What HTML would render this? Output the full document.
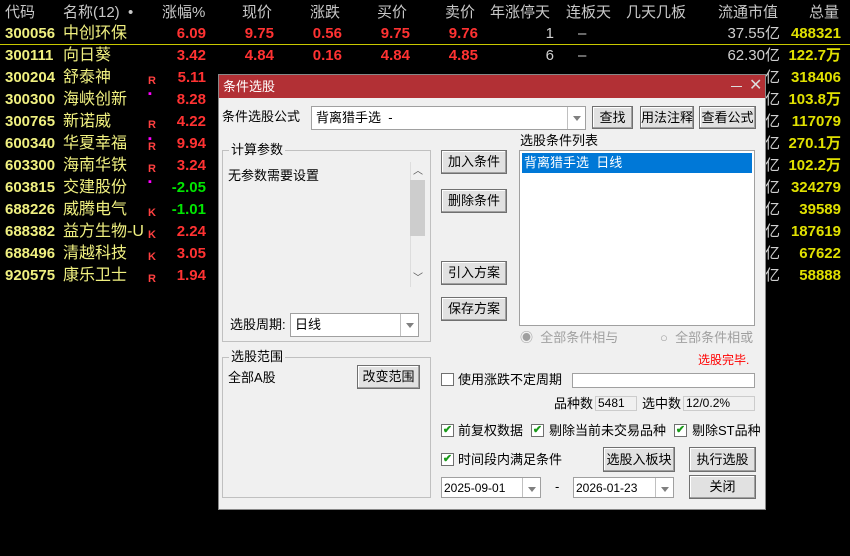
<!DOCTYPE html><html><head><meta charset="utf-8"><style>
*{margin:0;padding:0;box-sizing:border-box}
body{width:850px;height:556px;background:#000;position:relative;overflow:hidden;font-family:"Liberation Sans","Noto Sans CJK SC",sans-serif}
.a{position:absolute;white-space:nowrap;line-height:18px}
.h{color:#c8c8c8;font-size:15px;top:4px}
.c{color:#f0f080;font-size:15px;font-weight:bold;left:5px}
.n{color:#f0f080;font-size:16px;left:63px}
.r{color:#ff3232;font-size:15px;font-weight:bold;text-align:right}
.g{color:#00e600}
.w{color:#d0d0d0;font-size:15px;text-align:right}
.y{color:#e0e000;font-size:15px;font-weight:bold;text-align:right;width:70px;left:771px}
.m{color:#ff4040;font-size:11px;font-weight:bold;left:148px}
.d{font-size:13px;color:#000}
.btn{position:absolute;background:#e1e1e1;border:1px solid #707070;box-shadow:inset -1px -1px #a0a0a0,inset 1px 1px #fff;font-size:13px;text-align:center;color:#000}
.box{position:absolute;background:#fff;border:1px solid #a0a0a0}
.grp{position:absolute;border:1px solid #c0c0c0}
.gl{position:absolute;background:#f0f0f0;font-size:13px;line-height:16px;padding:0 2px;top:-9px;left:6px}
.cb{position:absolute;width:13px;height:13px;border:1px solid #707070;background:#fff;font-size:11px;color:#1a9a1a;line-height:11px;text-align:center;font-weight:bold}
.arr{position:absolute;right:0;top:0;bottom:0;width:18px;border-left:1px solid #c0c0c0}
.arr:after{content:"";position:absolute;left:5px;top:9px;border:4px solid transparent;border-top:5px solid #808080}
</style></head><body>
<div class="a h" style="left:5px">代码</div>
<div class="a h" style="left:63px">名称(12)&nbsp; •</div>
<div class="a h" style="left:162px">涨幅%</div>
<div class="a h" style="left:242px">现价</div>
<div class="a h" style="left:310px">涨跌</div>
<div class="a h" style="left:377px">买价</div>
<div class="a h" style="left:445px">卖价</div>
<div class="a h" style="left:490px">年涨停天</div>
<div class="a h" style="left:566px">连板天</div>
<div class="a h" style="left:626px">几天几板</div>
<div class="a h" style="left:718px">流通市值</div>
<div class="a h" style="left:809px">总量</div>
<div class="a" style="left:0;top:44px;width:850px;height:1px;background:#c8c800"></div>
<div style="position:absolute;left:0;top:25px;width:850px">
<div class="a c" style="top:0">300056</div><div class="a n" style="top:0">中创环保</div><div class="a r" style="top:0;left:150px;width:56px">6.09</div><div class="a r" style="top:0;left:220px;width:54px">9.75</div><div class="a r" style="top:0;left:290px;width:52px">0.56</div><div class="a r" style="top:0;left:350px;width:60px">9.75</div><div class="a r" style="top:0;left:420px;width:58px">9.76</div><div class="a w" style="top:0;left:520px;width:34px">1</div><div class="a w" style="top:0;left:578px">–</div><div class="a w" style="top:0;left:690px;width:90px">37.55亿</div><div class="a y" style="top:0">488321</div>
<div class="a c" style="top:22px">300111</div><div class="a n" style="top:22px">向日葵</div><div class="a r" style="top:22px;left:150px;width:56px">3.42</div><div class="a r" style="top:22px;left:220px;width:54px">4.84</div><div class="a r" style="top:22px;left:290px;width:52px">0.16</div><div class="a r" style="top:22px;left:350px;width:60px">4.84</div><div class="a r" style="top:22px;left:420px;width:58px">4.85</div><div class="a w" style="top:22px;left:520px;width:34px">6</div><div class="a w" style="top:22px;left:578px">–</div><div class="a w" style="top:22px;left:690px;width:90px">62.30亿</div><div class="a y" style="top:22px">122.7万</div>
</div>
<div style="position:absolute;left:0;top:69px;width:850px">
<div class="a c" style="top:0">300204</div><div class="a n" style="top:0">舒泰神</div><div class="a m" style="top:3px">R</div><div class="a r" style="top:0;left:150px;width:56px">5.11</div><div class="a w" style="top:0;left:690px;width:90px">亿</div><div class="a y" style="top:0">318406</div>
<div class="a c" style="top:22px">300300</div><div class="a n" style="top:22px">海峡创新</div><div class="a m" style="top:16px;color:#f0f">▪</div><div class="a r" style="top:22px;left:150px;width:56px">8.28</div><div class="a w" style="top:22px;left:690px;width:90px">亿</div><div class="a y" style="top:22px">103.8万</div>
<div class="a c" style="top:44px">300765</div><div class="a n" style="top:44px">新诺威</div><div class="a m" style="top:47px">R</div><div class="a r" style="top:44px;left:150px;width:56px">4.22</div><div class="a w" style="top:44px;left:690px;width:90px">亿</div><div class="a y" style="top:44px">117079</div>
<div class="a c" style="top:66px">600340</div><div class="a n" style="top:66px">华夏幸福</div><div class="a m" style="top:61px;color:#f0f">▪</div><div class="a m" style="top:69px">R</div><div class="a r" style="top:66px;left:150px;width:56px">9.94</div><div class="a w" style="top:66px;left:690px;width:90px">亿</div><div class="a y" style="top:66px">270.1万</div>
<div class="a c" style="top:88px">603300</div><div class="a n" style="top:88px">海南华铁</div><div class="a m" style="top:91px">R</div><div class="a r" style="top:88px;left:150px;width:56px">3.24</div><div class="a w" style="top:88px;left:690px;width:90px">亿</div><div class="a y" style="top:88px">102.2万</div>
<div class="a c" style="top:110px">603815</div><div class="a n" style="top:110px">交建股份</div><div class="a m" style="top:104px;color:#f0f">▪</div><div class="a r g" style="top:110px;left:150px;width:56px">-2.05</div><div class="a w" style="top:110px;left:690px;width:90px">亿</div><div class="a y" style="top:110px">324279</div>
<div class="a c" style="top:132px">688226</div><div class="a n" style="top:132px">威腾电气</div><div class="a m" style="top:135px">K</div><div class="a r g" style="top:132px;left:150px;width:56px">-1.01</div><div class="a w" style="top:132px;left:690px;width:90px">亿</div><div class="a y" style="top:132px">39589</div>
<div class="a c" style="top:154px">688382</div><div class="a n" style="top:154px">益方生物-U</div><div class="a m" style="top:157px">K</div><div class="a r" style="top:154px;left:150px;width:56px">2.24</div><div class="a w" style="top:154px;left:690px;width:90px">亿</div><div class="a y" style="top:154px">187619</div>
<div class="a c" style="top:176px">688496</div><div class="a n" style="top:176px">清越科技</div><div class="a m" style="top:179px">K</div><div class="a r" style="top:176px;left:150px;width:56px">3.05</div><div class="a w" style="top:176px;left:690px;width:90px">亿</div><div class="a y" style="top:176px">67622</div>
<div class="a c" style="top:198px">920575</div><div class="a n" style="top:198px">康乐卫士</div><div class="a m" style="top:201px">R</div><div class="a r" style="top:198px;left:150px;width:56px">1.94</div><div class="a w" style="top:198px;left:690px;width:90px">亿</div><div class="a y" style="top:198px">58888</div>
</div>

<div style="position:absolute;left:218px;top:74px;width:548px;height:436px;background:#f0f0f0;border:1px solid #888">
<div style="position:absolute;left:0;top:0;width:100%;height:23px;background:#b23035"></div>
<div class="a" style="left:4px;top:3px;color:#fff;font-size:13px">条件选股</div>
<div class="a" style="left:512px;top:11px;width:11px;height:1px;background:#ddd"></div>
<div class="a" style="left:530px;top:2px;color:#ddd;font-size:16px">✕</div>
</div>
<div class="a d" style="left:222px;top:108px">条件选股公式</div>
<div class="box" style="left:311px;top:106px;width:275px;height:24px"><span class="a d" style="left:4px;top:2px">背离猎手选&nbsp; -</span><div class="arr"></div></div>
<div class="btn" style="left:592px;top:106px;width:41px;height:23px;line-height:21px">查找</div>
<div class="btn" style="left:640px;top:106px;width:54px;height:23px;line-height:21px">用法注释</div>
<div class="btn" style="left:699px;top:106px;width:57px;height:23px;line-height:21px">查看公式</div>

<div class="grp" style="left:222px;top:150px;width:209px;height:192px"><div class="gl">计算参数</div></div>
<div class="a d" style="left:228px;top:167px">无参数需要设置</div>
<div class="a" style="left:410px;top:162px;width:16px;height:125px;background:#f0f0f0;border-left:1px solid #ddd"></div>
<div class="a" style="left:410px;top:180px;width:15px;height:56px;background:#cdcdcd"></div>
<div class="a" style="left:413px;top:163px;font-size:10px;color:#555">︿</div>
<div class="a" style="left:413px;top:270px;font-size:10px;color:#555">﹀</div>
<div class="a d" style="left:230px;top:316px">选股周期:</div>
<div class="box" style="left:290px;top:313px;width:129px;height:24px"><span class="a d" style="left:4px;top:2px">日线</span><div class="arr"></div></div>

<div class="btn" style="left:441px;top:150px;width:66px;height:24px;line-height:22px">加入条件</div>
<div class="btn" style="left:441px;top:189px;width:66px;height:24px;line-height:22px">删除条件</div>
<div class="btn" style="left:441px;top:261px;width:66px;height:24px;line-height:22px">引入方案</div>
<div class="btn" style="left:441px;top:297px;width:66px;height:24px;line-height:22px">保存方案</div>

<div class="a d" style="left:520px;top:132px">选股条件列表</div>
<div class="box" style="left:519px;top:150px;width:236px;height:176px"><div style="position:absolute;left:2px;top:2px;right:2px;height:20px;background:#0078d7;color:#fff;font-size:13px;line-height:20px;padding-left:2px">背离猎手选&nbsp; 日线</div></div>
<div class="a" style="left:520px;top:329px;font-size:13px;color:#a0a0a0">◉&nbsp; 全部条件相与</div>
<div class="a" style="left:660px;top:329px;font-size:13px;color:#a0a0a0">○&nbsp; 全部条件相或</div>

<div class="grp" style="left:222px;top:357px;width:209px;height:141px"><div class="gl">选股范围</div></div>
<div class="a d" style="left:228px;top:369px">全部A股</div>
<div class="btn" style="left:357px;top:365px;width:63px;height:24px;line-height:22px">改变范围</div>
<div class="a" style="left:698px;top:351px;font-size:12px;color:#f00">选股完毕.</div>
<div class="cb" style="left:441px;top:373px"></div><div class="a d" style="left:458px;top:371px">使用涨跌不定周期</div>
<div class="box" style="left:572px;top:373px;width:183px;height:15px"></div>
<div class="a d" style="left:554px;top:395px">品种数</div>
<div class="a" style="left:595px;top:396px;width:42px;height:15px;border:1px solid #ccc;font-size:12px;line-height:13px;padding-left:2px">5481</div>
<div class="a d" style="left:642px;top:395px">选中数</div>
<div class="a" style="left:683px;top:396px;width:72px;height:15px;border:1px solid #ccc;font-size:12px;line-height:13px;padding-left:2px">12/0.2%</div>
<div class="cb" style="left:441px;top:424px">✔</div><div class="a d" style="left:458px;top:422px">前复权数据</div>
<div class="cb" style="left:531px;top:424px">✔</div><div class="a d" style="left:549px;top:422px">剔除当前未交易品种</div>
<div class="cb" style="left:674px;top:424px">✔</div><div class="a d" style="left:692px;top:422px">剔除ST品种</div>
<div class="cb" style="left:441px;top:453px">✔</div><div class="a d" style="left:458px;top:451px">时间段内满足条件</div>
<div class="btn" style="left:603px;top:447px;width:72px;height:25px;line-height:23px">选股入板块</div>
<div class="btn" style="left:689px;top:447px;width:67px;height:25px;line-height:23px">执行选股</div>
<div class="btn" style="left:689px;top:475px;width:67px;height:24px;line-height:22px">关闭</div>
<div class="box" style="left:441px;top:477px;width:100px;height:21px"><span class="a" style="left:2px;top:1px;font-size:12px">2025-09-01</span><div class="arr"></div></div>
<div class="a d" style="left:555px;top:478px">-</div>
<div class="box" style="left:573px;top:477px;width:101px;height:21px"><span class="a" style="left:2px;top:1px;font-size:12px">2026-01-23</span><div class="arr"></div></div>
</body></html>
